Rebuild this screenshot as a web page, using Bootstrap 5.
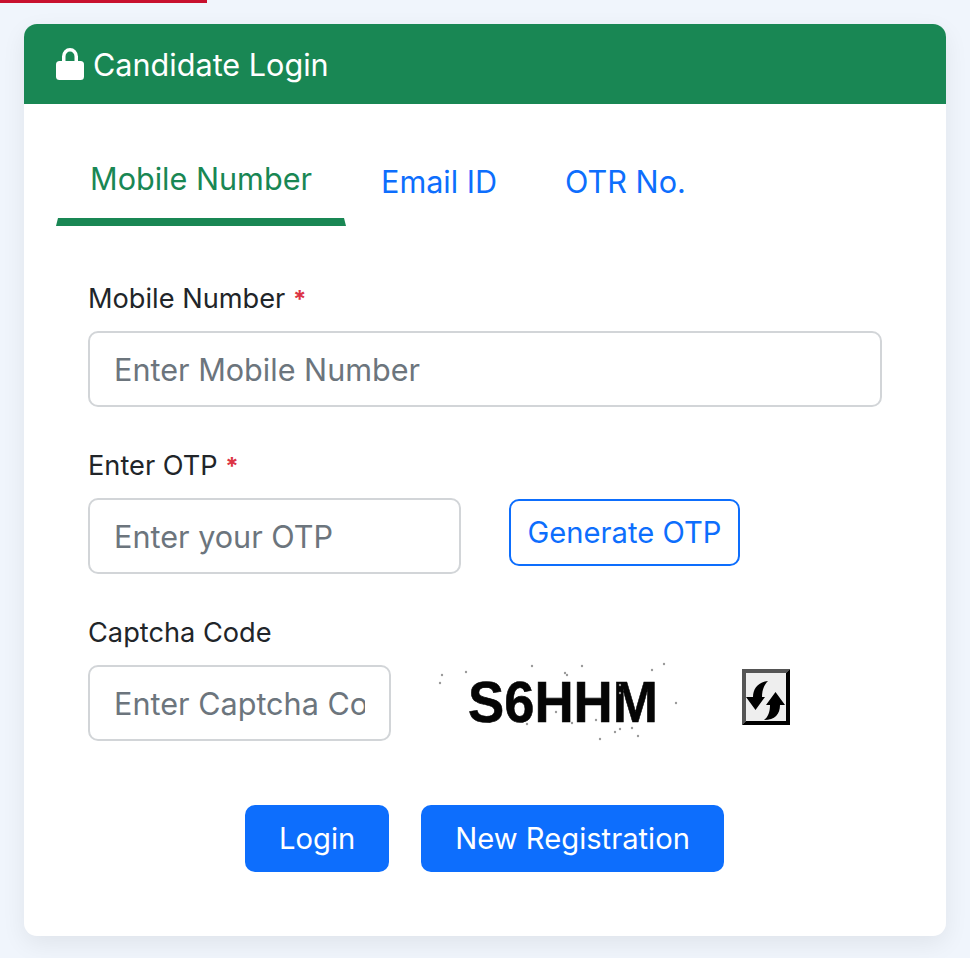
<!DOCTYPE html>
<html lang="en">
<head>
<meta charset="utf-8">
<title>Candidate Login</title>
<link href="https://cdn.jsdelivr.net/npm/bootstrap@5.3.0/dist/css/bootstrap.min.css" rel="stylesheet">
<style>
html,body{height:958px;overflow:hidden}
body{background:#f0f5fc;font-family:Inter,"Liberation Sans",sans-serif;color:#212529}
.top-strip{width:207px;height:3px;background:#c8102e}
.login-wrap{padding:21px 24px 0}
.login-card{border:0;border-radius:13px;height:912px;box-shadow:0 8px 24px rgba(0,0,0,.07);overflow:hidden}
.login-head{background:#198754;color:#fff;height:80px;padding:2px 32px 0;font-size:30.6px;display:flex;align-items:center;gap:9px;border:0;border-radius:0}
.lock-ico{width:28px;height:32px;display:block;margin-top:-2px}
.login-body{padding:32px 32px 0}
.tab-row{gap:0;border:0}
.tab-link{font-size:30.6px;line-height:40px;padding:26px 34px 20px;color:#0d6efd;display:block;text-decoration:none;white-space:nowrap}
.tab-link.on{color:#198754;padding:23px 32px 19px;border-bottom:8px solid #198754;border-left:2px solid transparent;border-right:2px solid transparent}
.tab-row .nav-item:nth-child(2) .tab-link{padding-left:35px}
.form-zone{padding:53px 32px 0;width:858px}
.fld-label{font-size:27.200px;line-height:40px;margin:0 0 12px;display:block}
.req{color:#dc3545;font-size:24px;font-weight:700;line-height:1;margin-left:0}
.fld-input{font-size:30.6px;height:76px;border:2px solid #d2d5d8;border-radius:10px;padding:0 24px;font-family:inherit}
.fld-input::placeholder{color:#6c757d}
.fld-gap{margin-bottom:39px}
.otp-in{width:373px}
.cap-in{width:303px}
.gen-btn{font-size:29.200px;height:67px;width:231px;border:2px solid #0d6efd;border-radius:10px;color:#0d6efd;background:#fff;margin-left:48px;padding:0;margin-bottom:7px;line-height:67px;display:flex;align-items:center;justify-content:center}
.cap-row{height:76px}
.cap-img{width:248px;height:90px;margin-left:46px;display:block;flex:none}
.cap-txt{font-family:"Liberation Sans",sans-serif;font-weight:700;font-size:58px;fill:#050505;stroke:#050505;stroke-width:.6;filter:blur(.7px)}
.ref-ico{width:48px;height:56px;margin-left:57px;margin-bottom:12px;display:block;flex:none}
.act-row{padding-top:64px;gap:32px;padding-right:1px}
.act-btn{font-size:29.200px;height:67px;border-radius:10px;padding:1px 34px 0;border:0;background:#0d6efd}
</style>
</head>
<body>
<div class="top-strip"></div>
<div class="login-wrap">
<div class="card login-card">
  <div class="card-header login-head">
    <svg class="lock-ico" viewBox="0 0 28 32"><path fill="#fff" d="M6 14V8.500a8 8.500 0 0 1 16 0V14h-3.500V8.500a4.500 5 0 0 0-9 0V14z"/><rect x="0" y="13" width="28" height="19" rx="3.500" fill="#fff"/></svg>
    <span>Candidate Login</span>
  </div>
  <div class="card-body login-body">
    <ul class="nav tab-row">
      <li class="nav-item"><a class="tab-link on" href="#">Mobile Number</a></li>
      <li class="nav-item"><a class="tab-link" href="#">Email ID</a></li>
      <li class="nav-item"><a class="tab-link" href="#">OTR No.</a></li>
    </ul>
    <form class="form-zone">
      <div class="fld-gap">
        <label class="fld-label">Mobile Number <span class="req">*</span></label>
        <input class="form-control fld-input" placeholder="Enter Mobile Number">
      </div>
      <div class="fld-gap">
        <label class="fld-label">Enter OTP <span class="req">*</span></label>
        <div class="d-flex align-items-center">
          <input class="form-control fld-input otp-in" placeholder="Enter your OTP">
          <button type="button" class="btn gen-btn">Generate OTP</button>
        </div>
      </div>
      <div>
        <label class="fld-label">Captcha Code</label>
        <div class="d-flex align-items-center cap-row">
          <input class="form-control fld-input cap-in" placeholder="Enter Captcha Code">
          <svg class="cap-img" viewBox="0 0 248 90">
            <text class="cap-txt" x="31" y="64" textLength="190" lengthAdjust="spacingAndGlyphs">S6HHM</text>
            <g fill="#9a9a9a">
              <circle cx="5" cy="17" r="1.200"/><circle cx="3" cy="25" r="1.200"/><circle cx="29" cy="14" r="1.200"/><circle cx="95" cy="8" r="1.200"/><circle cx="128" cy="15" r="1.200"/><circle cx="130" cy="17" r="1.200"/><circle cx="145" cy="8" r="1.200"/><circle cx="215" cy="12" r="1.200"/><circle cx="227" cy="6" r="1.200"/><circle cx="239" cy="45" r="1.200"/><circle cx="90" cy="66" r="1.200"/><circle cx="119" cy="54" r="1.200"/><circle cx="135" cy="65" r="1.200"/><circle cx="159" cy="62" r="1.200"/><circle cx="178" cy="74" r="1.200"/><circle cx="183" cy="71" r="1.200"/><circle cx="195" cy="70" r="1.200"/><circle cx="201" cy="78" r="1.200"/><circle cx="163" cy="81" r="1.200"/><circle cx="183" cy="27" r="1.200"/><circle cx="183" cy="35" r="1.200"/>
            </g>
          </svg>
          <svg class="ref-ico" viewBox="0 0 48 56">
            <rect width="48" height="56" fill="#eeeeee"/>
            <path d="M0 0H48L44 4H4V52L0 56z" fill="#555"/>
            <path d="M48 0V56H0L4 52H44V4z" fill="#000"/>
            <path fill="#000" d="M11 28C11 19 17 13 26 12 22 16 20 21 20 28H23L13.500 41 4 28Z"/>
            <path fill="#000" d="M28 36C28 43 26 48 22 51 33 51 38 45 38 36H43L33.500 23 24 36Z"/>
          </svg>
        </div>
      </div>
      <div class="d-flex justify-content-center act-row">
        <button type="button" class="btn btn-primary act-btn">Login</button>
        <button type="button" class="btn btn-primary act-btn">New Registration</button>
      </div>
    </form>
  </div>
</div>
</div>
<script src="https://cdn.jsdelivr.net/npm/bootstrap@5.3.0/dist/js/bootstrap.bundle.min.js"></script>
</body>
</html>
